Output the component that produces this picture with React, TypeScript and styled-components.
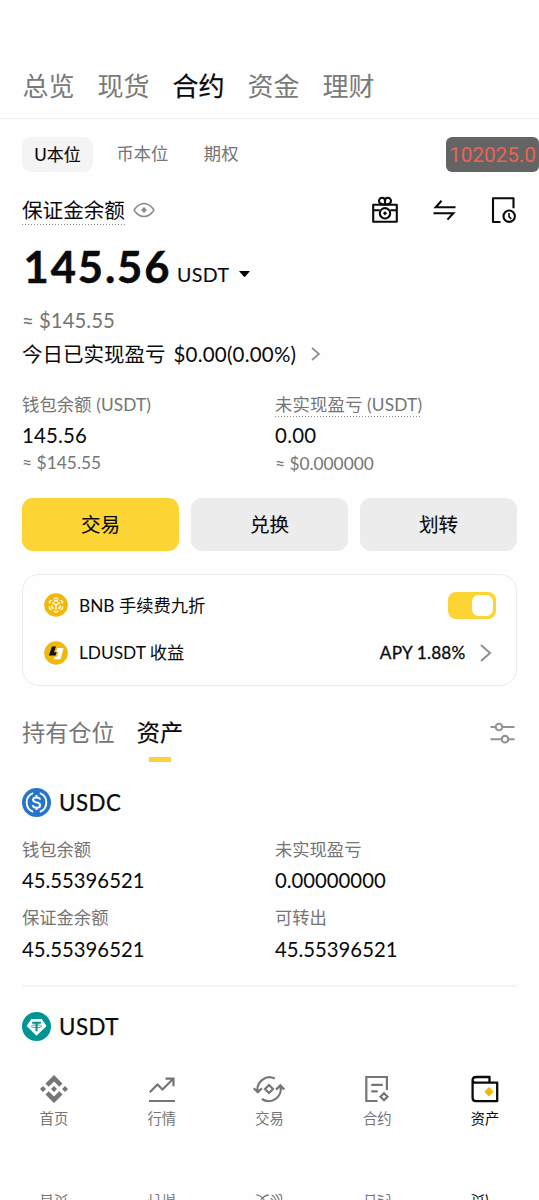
import React from 'react';
import styled, { createGlobalStyle } from 'styled-components';

const Global = createGlobalStyle`
  body { margin: 0; background: #fefefe; font-family: Lato, "Noto Sans CJK SC", sans-serif; color: #0a0a0a; }
  * { box-sizing: border-box; }
  svg { display: block; flex: none; overflow: visible; }
`;

const GRAY = '#757575';

const Screen = styled.div`
  position: relative;
  display: flex;
  flex-direction: column;
  width: 539px;
  height: 1200px;
  overflow: hidden;
  white-space: nowrap;
`;

const Text = styled.span<{ $size: number; $color?: string; $bold?: number; $track?: number }>`
  font-size: ${p => p.$size}px;
  color: ${p => p.$color ?? 'inherit'};
  -webkit-text-stroke: ${p => p.$bold ?? 0}px currentColor;
  letter-spacing: ${p => p.$track ?? 0}px;
`;

const TopTabs = styled.nav`
  display: flex;
  gap: 23px;
  height: 119px;
  padding: 69px 22px 0 22.5px;
  line-height: 34px;
  border-bottom: 1px solid #eeeeee;
`;

const SubTabs = styled.div`
  display: flex;
  align-items: center;
  height: 34px;
  margin-top: 18px;
  padding-left: 22px;
`;

const SubTab = styled(Text)`
  margin: -3px 35.5px 0 0;
`;

const Pill = styled.div`
  width: 71px;
  height: 35px;
  margin-right: 23.5px;
  line-height: 35px;
  text-align: center;
  background: #f4f4f4;
  border-radius: 9px;
`;

const Badge = styled.div`
  position: absolute;
  top: 137px;
  right: 0;
  width: 93px;
  height: 35px;
  border-radius: 6px;
  background: #646464;
  color: #ee6253;
  font: 20.8px/37px Roboto, sans-serif;
  letter-spacing: -0.1px;
  text-align: center;
`;

const Row = styled.div<{ $h: number; $top?: number }>`
  display: flex;
  align-items: center;
  height: ${p => p.$h}px;
  line-height: ${p => p.$h}px;
  margin-top: ${p => p.$top ?? 0}px;
  padding: 0 22px;
`;

const Dotted = styled.span<{ $h: number; $pad?: number }>`
  display: block;
  height: ${p => p.$h}px;
  padding-top: ${p => p.$pad ?? 0}px;
  background: repeating-linear-gradient(90deg, #8f8f8f 0 1px, transparent 1px 3px) left bottom / 100% 1px no-repeat;
`;

const EyeSlot = styled.span`
  margin-left: 8px;
`;

const Actions = styled.div`
  display: flex;
  gap: 34.5px;
  margin-left: auto;
`;

const Amount = styled.span`
  padding-left: 1.5px;
  font-size: 43.5px;
  font-weight: 700;
  letter-spacing: 1.9px;
  -webkit-text-stroke: 0.5px currentColor;
`;

const Unit = styled(Text)`
  margin: 17px 10px 0 5.5px;
  height: 52px;
  line-height: 52px;
`;

const Caret = styled.svg`
  margin-top: 16px;
`;

const Pnl = styled(Text)`
  margin: 0 15px 0 8px;
`;

const Columns = styled.div<{ $top: number }>`
  display: grid;
  grid-template-columns: 253px 1fr;
  margin-top: ${p => p.$top}px;
  padding: 0 22px;
`;

const Stat = styled.div<{ $rows: number[] }>`
  display: grid;
  grid-template-rows: ${p => p.$rows.map(r => `${r}px`).join(' ')};
  align-items: center;
  justify-items: start;
`;

const Buttons = styled.div`
  display: grid;
  grid-template-columns: repeat(3, 1fr);
  gap: 12px;
  height: 52.5px;
  margin-top: 25px;
  padding: 0 22px;
`;

const Button = styled.button<{ $primary?: boolean }>`
  border: 0;
  padding: 0 0 2px;
  border-radius: 11px;
  background: ${p => (p.$primary ? '#fcd535' : '#ececec')};
  font: 19.6px Lato, "Noto Sans CJK SC", sans-serif;
  color: #0a0a0a;
  -webkit-text-stroke: 0.1px currentColor;
`;

const Card = styled.section`
  height: 112px;
  margin: 23.5px 22px 0;
  padding: 6.5px 20.5px 0 20.5px;
  border: 1.5px solid #ebebeb;
  border-radius: 17px;
`;

const CardRow = styled.div`
  display: flex;
  align-items: center;
  height: 47.5px;
  gap: 11.5px;
`;

const CardLabel = styled(Text)`
  margin-top: -2px;
`;

const Toggle = styled.div`
  display: flex;
  justify-content: flex-end;
  width: 47.5px;
  height: 26.5px;
  margin-left: auto;
  padding: 2.8px;
  border-radius: 8px;
  background: #fcd535;
  &::after {
    content: '';
    width: 21px;
    border-radius: 6.5px;
    background: #fff;
  }
`;

const Apy = styled.div`
  display: flex;
  align-items: center;
  gap: 14.5px;
  margin: 1px 4.5px 0 auto;
`;

const HoldTabs = styled.div`
  display: flex;
  height: 46px;
  margin-top: 30px;
  padding: 0 24px 0 22px;
  gap: 22px;
  line-height: 32px;
  & > svg { margin: 5.5px 0 0 auto; }
`;

const ActiveTab = styled.div`
  display: flex;
  flex-direction: column;
  align-items: center;
  &::after {
    content: '';
    width: 22px;
    height: 4.5px;
    margin-top: 9px;
    background: #f8d33a;
  }
`;

const CoinName = styled(Text)`
  margin-left: 8px;
`;

const Rule = styled.div`
  height: 2px;
  margin: 22.5px 22px 0;
  background: #f4f4f4;
`;

const TabBar = styled.nav`
  display: grid;
  grid-template-columns: repeat(5, 1fr);
  margin-top: 33px;
`;

const TabItem = styled.div<{ $active?: boolean }>`
  display: flex;
  flex-direction: column;
  align-items: center;
  color: ${p => (p.$active ? '#0a0a0a' : '#757575')};
  font-size: 14.3px;
  line-height: 20px;
  & > svg { margin-bottom: 6.5px; }
`;

const Reflection = styled(TabBar)`
  position: absolute;
  top: 1191px;
  left: 0;
  width: 100%;
  margin: 0;
  transform: scaleY(-1);
`;

const Eye = () => (
  <svg width="22" height="16" viewBox="0 0 22 16" fill="none" stroke="#8c8c8c" strokeWidth="1.5">
    <path d="M1 8C4 3.5 7.5 1.4 11 1.4S18 3.5 21 8c-3 4.500-6.500 6.600-10 6.600S4 12.500 1 8Z" strokeLinejoin="round" />
    <path d="m11 5 3 3-3 3-3-3Z" fill="#8c8c8c" stroke="none" />
  </svg>
);

const Gift = () => (
  <svg width="26" height="28" viewBox="0 0 26 28" fill="none" stroke="#0a0a0a" strokeWidth="2.100" strokeLinejoin="round">
    <path d="M1.200 8.800h23.600v16.900H1.200ZM1.200 14.300h6.500M18.300 14.300h6.500" />
    <path d="M13 8.500C9 8.500 7 7 7 5s1.400-3.200 3-3.200S13 3.100 13 5v3.500c4 0 6-1.500 6-3.500s-1.400-3.200-3-3.200-3 1.300-3 3.200" />
    <circle cx="13" cy="17.300" r="5.200" />
    <path d="m13 15.200 2.100 2.100-2.100 2.100-2.100-2.100Z" fill="#0a0a0a" stroke="none" />
  </svg>
);

const Swap = () => (
  <svg width="24" height="28" viewBox="0 0 24 28" fill="none" stroke="#0a0a0a" strokeWidth="2.100">
    <path d="M22.500 11.200H2.700L8.500 4.800M.5 17.200h19.800L14.500 23.600" />
  </svg>
);

const History = () => (
  <svg width="26" height="28" viewBox="0 0 26 28" fill="none" stroke="#0a0a0a" strokeWidth="2.100">
    <path d="M9.500 26H2V2.300h20.500v10" strokeLinejoin="round" />
    <circle cx="18.200" cy="20.200" r="5.700" />
    <path d="M18 16.900v3.700l2.300 2.200" strokeWidth="1.600" />
  </svg>
);

const Chevron = ({ w, h, stroke }: { w: number; h: number; stroke: number }) => (
  <svg width={w} height={h} viewBox={`0 0 ${w} ${h}`} fill="none" stroke="#8f8f8f" strokeWidth={stroke}>
    <path d={`M1 1 L${w - 1} ${h / 2} L1 ${h - 1}`} />
  </svg>
);

const BnbCoin = () => (
  <svg width="24" height="24" viewBox="0 0 24 24">
    <circle cx="12" cy="12" r="11.800" fill="#efb80c" />
    <g fill="none" stroke="#fff8e0" strokeWidth="1.300">
      <path d="M9.600 6.100 12 4.800l2.400 1.300M16.300 7.200l2.200 1.200v2.300M18.500 13.200v2.400l-2.200 1.200M14.400 17.900 12 19.200l-2.400-1.300M7.700 16.800l-2.200-1.200v-2.400M5.500 10.700V8.400l2.200-1.200" />
      <path d="m8 9.700 4 2.300 4-2.300M12 12v4.700M9.800 8.500 12 7.400l2.200 1.100M8 12.200v2.300l1.700 1M16 12.200v2.300l-1.700 1" strokeWidth="1.500" />
    </g>
  </svg>
);

const LdCoin = () => (
  <svg width="24" height="24" viewBox="0 0 24 24">
    <circle cx="12" cy="12" r="11.800" fill="#efb80c" />
    <path d="M8 5.500h4L10 11.300h2.600l-1 3.200H4.800Z" fill="#111" />
    <path d="M13.300 7h6.300L16.500 18.300H9.800l.8-2.600h2.500l1.300-4.900h-2.200Z" fill="#fff" />
  </svg>
);

const Filter = () => (
  <svg width="25" height="22" viewBox="0 0 25 22" fill="none" stroke="#929292" strokeWidth="2.100">
    <path d="M.5 5h5M12.500 5h12M.5 17.200h11M18.500 17.200h6" />
    <circle cx="9" cy="5" r="3.300" />
    <circle cx="15" cy="17.200" r="3.300" />
  </svg>
);

const UsdcCoin = () => (
  <svg width="29" height="29" viewBox="0 0 32 32">
    <circle cx="16" cy="16" r="16" fill="#2775ca" />
    <g fill="none" stroke="#fff" strokeWidth="2.100">
      <path d="M12.300 5.700a11 11 0 0 0 0 20.600M19.700 5.700a11 11 0 0 1 0 20.600" />
      <path d="M20 12.900c-.3-1.700-1.700-2.500-4-2.500-2.400 0-3.800 1-3.800 2.700 0 1.800 1.500 2.400 3.800 2.800 2.400.4 4 1.100 4 3 0 1.800-1.600 2.900-4 2.900-2.500 0-4-1-4.200-2.900M16 7.800v2.600M16 21.600v2.600" />
    </g>
  </svg>
);

const UsdtCoin = () => (
  <svg width="29" height="29" viewBox="0 0 29 29">
    <circle cx="14.500" cy="14.500" r="14.500" fill="#019493" />
    <path d="M9.300 7.100h10.500l4.700 6.900-10 9.800L4.600 14Z" fill="#fff" />
    <path d="M10.200 9.800h8.700v1.900h-3.300v7.500h-2.100v-7.500h-3.300Z" fill="#019493" />
    <ellipse cx="14.500" cy="14.300" rx="5.200" ry="1.400" fill="none" stroke="#019493" strokeWidth=".8" />
  </svg>
);

const HomeIcon = () => (
  <svg width="28" height="28" viewBox="0 0 28 28" fill="currentColor">
    <path d="m14 0 8.500 8.500-3.200 3.200L14 6.400l-5.300 5.300-3.200-3.200ZM14 28l8.500-8.500-3.200-3.200-5.300 5.300-5.300-5.300-3.200 3.200ZM14 11l3 3-3 3-3-3ZM3 11l3 3-3 3-3-3ZM25 11l3 3-3 3-3-3Z" />
  </svg>
);

const MarketIcon = () => (
  <svg width="28" height="28" viewBox="0 0 28 28" fill="none" stroke="currentColor" strokeWidth="2.200">
    <path d="m1.800 17.300 7.700-7.800 5 5L25 4M17.500 3.700h8v7.600M1 26h26" />
  </svg>
);

const TradeIcon = () => (
  <svg width="34" height="28" viewBox="0 0 34 28" fill="none" stroke="currentColor" strokeWidth="2.200">
    <path d="M22.800 3.600A12 12 0 0 0 5.700 16.500M1.800 13.200l4 4 4.100-4M9.900 24A12 12 0 0 0 28.300 11M24.100 14.600l4.200-4.200 4 4.200" />
    <path d="m17 10 4 4-4 4-4-4Z" />
  </svg>
);

const FuturesIcon = () => (
  <svg width="26" height="28" viewBox="0 0 26 28" fill="none" stroke="currentColor" strokeWidth="2.200">
    <path d="M13.500 26H2.300V2h20.600v13M7.300 9.800h11.400M7.300 16.400h6.400" />
    <path d="m20 18.200 3.500 3.500-3.500 3.500-3.500-3.500Z" />
  </svg>
);

const WalletIcon = () => (
  <svg width="28" height="28" viewBox="0 0 28 28" fill="none" stroke="currentColor" strokeWidth="2.300" strokeLinejoin="round">
    <path d="M18.500 7.500V2H5.500C3 2 1.600 3.300 1.600 5.200M4.500 7.700h21.700v18.400H5c-2.200 0-3.400-1.200-3.400-3.400V4.900c0 1.700 1.200 2.800 2.900 2.800" />
    <path d="m18 12 4.700 4.700-4.700 4.700-4.700-4.700Z" fill="#f0b90b" stroke="none" />
  </svg>
);

const NAV = [
  { label: '首页', icon: <HomeIcon /> },
  { label: '行情', icon: <MarketIcon /> },
  { label: '交易', icon: <TradeIcon /> },
  { label: '合约', icon: <FuturesIcon /> },
  { label: '资产', icon: <WalletIcon />, active: true },
];

const ASSET_STATS = [
  ['钱包余额', '45.55396521', '保证金余额', '45.55396521'],
  ['未实现盈亏', '0.00000000', '可转出', '45.55396521'],
];

export default function App() {
  return (
    <Screen>
      <Global />
      <TopTabs>
        {['总览', '现货', '合约', '资金', '理财'].map(t => (
          <Text key={t} $size={26} $color={t === '合约' ? undefined : '#7a7a7a'} $bold={t === '合约' ? 0.25 : 0}>
            {t}
          </Text>
        ))}
      </TopTabs>
      <SubTabs>
        <Pill><Text $size={17} $bold={0.15}>U本位</Text></Pill>
        <SubTab $size={17.3} $color={GRAY}>币本位</SubTab>
        <SubTab $size={17.3} $color={GRAY}>期权</SubTab>
      </SubTabs>
      <Badge>102025.0</Badge>

      <Row $h={30} $top={24}>
        <Dotted $h={30}><Text $size={20.6}>保证金余额</Text></Dotted>
        <EyeSlot><Eye /></EyeSlot>
        <Actions><Gift /><Swap /><History /></Actions>
      </Row>
      <Row $h={52} $top={15}>
        <Amount>145.56</Amount>
        <Unit $size={19.6} $bold={0.1} $track={0.4}>USDT</Unit>
        <Caret width="11" height="6" viewBox="0 0 11 6"><path d="M0 0h11L6.300 5.500q-.8.700-1.600 0Z" /></Caret>
      </Row>
      <Row $h={30} $top={13}><Text $size={20.4} $color={GRAY}>≈ $145.55</Text></Row>
      <Row $h={30} $top={4}>
        <Text $size={20.5}>今日已实现盈亏</Text>
        <Pnl $size={20.5} $track={0.2}>$0.00(0.00%)</Pnl>
        <Chevron w={9} h={14} stroke={1.7} />
      </Row>

      <Columns $top={20}>
        <Stat $rows={[28, 35, 21]}>
          <Text $size={17.3} $color={GRAY} $track={0.12}>钱包余额 (USDT)</Text>
          <Text $size={20.4} $track={0.2}>145.56</Text>
          <Text $size={17.4} $color={GRAY}>≈ $145.55</Text>
        </Stat>
        <Stat $rows={[28, 36, 20]}>
          <Dotted $h={28} $pad={1.5}><Text $size={17.3} $color={GRAY} $track={0.2}>未实现盈亏 (USDT)</Text></Dotted>
          <Text $size={20.4} $track={0.3}>0.00</Text>
          <Text $size={17.3} $color={GRAY}>≈ $0.000000</Text>
        </Stat>
      </Columns>

      <Buttons>
        <Button $primary>交易</Button>
        <Button>兑换</Button>
        <Button>划转</Button>
      </Buttons>

      <Card>
        <CardRow><BnbCoin /><CardLabel $size={17.3}>BNB 手续费九折</CardLabel><Toggle /></CardRow>
        <CardRow>
          <LdCoin /><CardLabel $size={17.3}>LDUSDT 收益</CardLabel>
          <Apy><CardLabel $size={17.2} $bold={0.3} $track={0.2}>APY 1.88%</CardLabel><Chevron w={11} h={18} stroke={2} /></Apy>
        </CardRow>
      </Card>

      <HoldTabs>
        <Text $size={23.2} $color={GRAY}>持有仓位</Text>
        <ActiveTab><Text $size={23.2} $bold={0.2}>资产</Text></ActiveTab>
        <Filter />
      </HoldTabs>

      <Row $h={30} $top={25.5}><UsdcCoin /><CoinName $size={22.3} $bold={0.25} $track={0.5}>USDC</CoinName></Row>
      <Columns $top={15.5}>
        {ASSET_STATS.map((col, i) => (
          <Stat key={i} $rows={[30, 34, 38, 27]}>
            {col.map((t, j) => (
              <Text key={j} $size={j % 2 ? 20.3 : 17.3} $color={j % 2 ? undefined : GRAY}>{t}</Text>
            ))}
          </Stat>
        ))}
      </Columns>
      <Rule />
      <Row $h={30} $top={25}><UsdtCoin /><CoinName $size={22.3} $bold={0.25} $track={0.5}>USDT</CoinName></Row>

      <TabBar>
        {NAV.map(n => (
          <TabItem key={n.label} $active={n.active}>{n.icon}{n.label}</TabItem>
        ))}
      </TabBar>
      <Reflection aria-hidden>
        {NAV.map(n => (
          <TabItem key={n.label} $active={n.active}>{n.label}</TabItem>
        ))}
      </Reflection>
    </Screen>
  );
}
